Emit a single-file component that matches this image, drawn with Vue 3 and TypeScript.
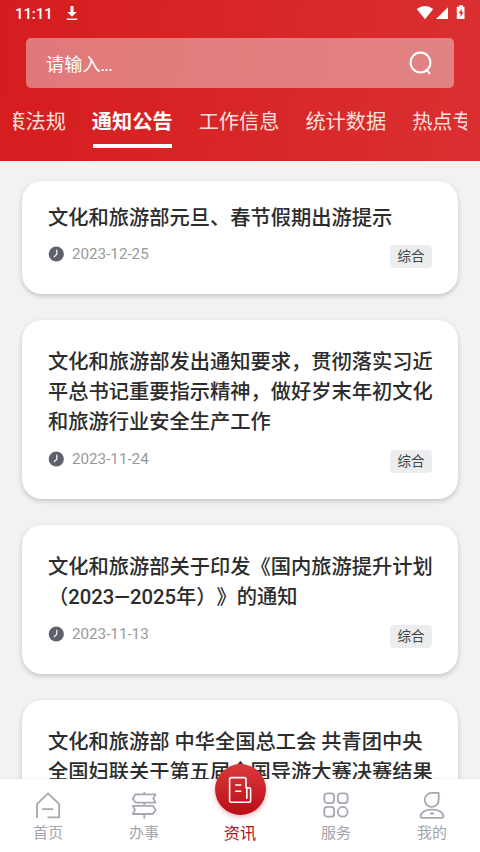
<script setup lang="ts">
import { ref } from 'vue'

interface Notice {
  lines: string[]
  date: string
  tag: string
}

const tabs = ['政策法规', '通知公告', '工作信息', '统计数据', '热点专题']
const activeTab = ref(1)

const notices: Notice[] = [
  { lines: ['文化和旅游部元旦、春节假期出游提示'], date: '2023-12-25', tag: '综合' },
  {
    lines: ['文化和旅游部发出通知要求，贯彻落实习近', '平总书记重要指示精神，做好岁末年初文化', '和旅游行业安全生产工作'],
    date: '2023-11-24',
    tag: '综合',
  },
  { lines: ['文化和旅游部关于印发《国内旅游提升计划', '（2023—2025年）》的通知'], date: '2023-11-13', tag: '综合' },
  { lines: ['文化和旅游部 中华全国总工会 共青团中央', '全国妇联关于第五届全国导游大赛决赛结果'], date: '', tag: '' },
]
</script>

<template>
  <div class="screen">
    <header class="top">
      <div class="status">
        <span class="time">11:11</span>
        <svg class="download" width="12" height="16" viewBox="0 0 12 16">
          <path d="M4.500 0h3v6h3.300L6 10.800 1.200 6h3.300z M.8 12.500h10.400v1.600H.8z" fill="#fff" />
        </svg>
        <svg class="signals" width="50" height="16" viewBox="0 0 50 16">
          <path d="M.7 3.900Q9 -1.900 17.200 3.900L9 14.300z" fill="#fff" />
          <path d="M32 2.200V14H20z" fill="#fff" />
          <path d="M43 .3h4v1.500h1.500V14h-7.700V1.800H43z" fill="#fff" />
          <path d="M45.700 3.700l-3 4.600h1.800v3.700l3-4.800h-1.800z" fill="#d92a2b" />
        </svg>
      </div>
      <div class="search">
        <span>请输入<span class="dots">...</span></span>
        <svg width="24" height="26" viewBox="0 0 24 26" fill="none" stroke="#fff" stroke-width="2">
          <circle cx="11.500" cy="12.500" r="9.900" />
          <path d="M17 19l4 5" />
        </svg>
      </div>
      <nav class="tabs">
        <span
          v-for="(tab, i) in tabs"
          :key="tab"
          class="tab"
          :class="{ active: i === activeTab }"
          @click="activeTab = i"
        >{{ tab }}</span>
      </nav>
    </header>

    <main class="list">
      <article v-for="item in notices" :key="item.lines[0]" class="card">
        <h3 class="title">
          <span v-for="line in item.lines" :key="line" class="line">{{ line }}</span>
        </h3>
        <div v-if="item.date" class="meta">
          <svg width="16" height="16" viewBox="0 0 16 16">
            <circle cx="8.300" cy="8" r="7.600" fill="#5e616b" />
            <path d="M8.800 3.700v4.500l-3 3" fill="none" stroke="#fff" stroke-width="1.200" />
          </svg>
          <time>{{ item.date }}</time>
          <span class="tag">{{ item.tag }}</span>
        </div>
      </article>
    </main>

    <footer class="bar">
      <div class="item">
        <svg width="28" height="28" viewBox="0 0 28 28" class="icon">
          <path d="M3 26V12.200L14 1.300 25.200 12.200V25.300H13.500M8.300 17.200h11" />
        </svg>
        <span>首页</span>
      </div>
      <div class="item">
        <svg width="28" height="28" viewBox="0 0 28 28" class="icon">
          <path d="M14.300 0v2.300M14.300 10.600v3.200M14.300 22v4.500M5.500 2.300h20L23.300 6.400l2.200 4.200h-20L2.800 6.400zM2.800 13.800h20l2.900 4.100L22.800 22h-20L5 17.900z" />
        </svg>
        <span>办事</span>
      </div>
      <div class="item current">
        <div class="bubble">
          <svg width="26" height="28" viewBox="0 0 26 28" fill="none" stroke="#fff" stroke-width="1.600" stroke-linejoin="round" stroke-linecap="round">
            <path d="M19 26.200H4.300q-1.700 0-1.700-1.700V3.300q0-1.700 1.700-1.700h13q1.700 0 1.700 1.700v8.400h2.900q1.700 0 1.700 1.700v11.100q0 1.700-1.700 1.700H19M19.800 12v10.200M8.800 9h5M8.800 15.300h5" />
          </svg>
        </div>
        <span>资讯</span>
      </div>
      <div class="item">
        <svg width="28" height="28" viewBox="0 0 28 28" class="icon">
          <rect x="2.300" y="1.300" width="9.800" height="9.800" rx="3" />
          <rect x="15.800" y="1.300" width="9.800" height="9.800" rx="3" />
          <rect x="2.300" y="14.900" width="9.800" height="9.800" rx="3" />
          <circle cx="20.700" cy="19.800" r="4.900" />
        </svg>
        <span>服务</span>
      </div>
      <div class="item">
        <svg width="28" height="28" viewBox="0 0 28 28" class="icon">
          <path d="M20.700 .9v6.600a7 7 0 1 1-7-6.600zM12 21.500h4M4.400 25.800q-2 0-1.900-1.800Q4 17.600 14 17.600t11.500 6.400q.1 1.800-1.900 1.800z" />
        </svg>
        <span>我的</span>
      </div>
    </footer>
  </div>
</template>

<style>
body {
  margin: 0;
  overflow: hidden;
}
</style>

<style scoped>
.screen {
  width: 480px;
  height: 852px;
  display: flex;
  flex-direction: column;
  overflow: hidden;
  background: #f2f2f3;
  font-family: Roboto, 'Noto Sans CJK SC', sans-serif;
  text-spacing-trim: space-all;
}
.top {
  flex: none;
  height: 161px;
  box-sizing: border-box;
  background: linear-gradient(95deg, #d61c1e, #d82627 50%, #da2f31);
  color: #fff;
}
.status {
  display: flex;
  align-items: center;
  height: 27px;
  padding: 0 14px 0 15px;
}
.time {
  font-size: 15px;
  font-weight: 500;
  letter-spacing: -0.1px;
  width: 51px;
}
.signals {
  margin-left: auto;
  margin-top: -2px;
}
.search {
  display: flex;
  align-items: center;
  justify-content: space-between;
  height: 50px;
  margin: 11px 26px 0;
  padding: 0 21px 0 20px;
  border-radius: 5px;
  box-sizing: border-box;
  background: rgba(235, 225, 225, 0.47);
  font-size: 18.2px;
}
.dots {
  letter-spacing: -1px;
}
.tabs {
  display: flex;
  gap: 26px;
  justify-content: center;
  margin: 15px 13px 0;
  height: 47px;
  overflow: hidden;
}
.tab {
  flex: none;
  position: relative;
  left: -1px;
  font-size: 20.2px;
  line-height: 38px;
  color: #fbe0dc;
}
.tab.active {
  color: #fff;
  font-weight: 700;
}
.tab.active::after {
  content: '';
  position: absolute;
  left: 1px;
  right: 1px;
  top: 41px;
  height: 4px;
  background: #fff;
}
.list {
  flex: 1;
  min-height: 0;
  overflow: hidden;
  display: flex;
  flex-direction: column;
  gap: 26px;
  padding: 19.5px 22px 0;
}
.card {
  flex: none;
  padding: 27px 26px 23px;
  border-radius: 20px;
  background: #fff;
  box-shadow: 0 2px 5px rgba(0, 0, 0, 0.2);
}
.card:first-child {
  padding-top: 22.5px;
  padding-bottom: 21.5px;
}
.title {
  margin: 0;
  font-size: 20.26px;
  font-weight: 500;
  line-height: 30px;
  color: #2c2c2c;
}
.line {
  display: block;
  white-space: nowrap;
}
.meta {
  display: flex;
  align-items: flex-start;
  height: 29px;
  padding-top: 10px;
}
.card:first-child .meta {
  padding-top: 9px;
  height: 30px;
}
.meta svg {
  margin-top: 4px;
}
time {
  margin-left: 8px;
  font-size: 15.2px;
  line-height: 25px;
  color: #999;
}
.tag {
  margin-left: auto;
  margin-top: 3px;
  width: 42px;
  height: 23px;
  border-radius: 4px;
  background: #ecedef;
  color: #444;
  font-size: 13.5px;
  line-height: 23px;
  text-align: center;
}
.bar {
  flex: none;
  display: flex;
  height: 73px;
  background: #fff;
  position: relative;
  box-shadow: 0 -1px 1px rgba(0, 0, 0, 0.03);
}
.item {
  flex: 1;
  display: flex;
  flex-direction: column;
  align-items: center;
  padding-top: 13px;
  font-size: 15px;
  line-height: 26px;
  color: #a3a4ad;
}
.icon {
  fill: none;
  stroke: #a6a7b2;
  stroke-width: 1.8;
  stroke-linejoin: round;
}
.current {
  padding-top: 0;
  color: #b0141c;
  font-size: 16.3px;
}
.bubble {
  display: flex;
  align-items: center;
  justify-content: center;
  width: 51px;
  height: 51px;
  margin-top: -15px;
  margin-bottom: 6px;
  border-radius: 50%;
  background: linear-gradient(#d93a3d, #b90d15);
  box-shadow: 0 2px 5px rgba(190, 20, 28, 0.3);
}
</style>
